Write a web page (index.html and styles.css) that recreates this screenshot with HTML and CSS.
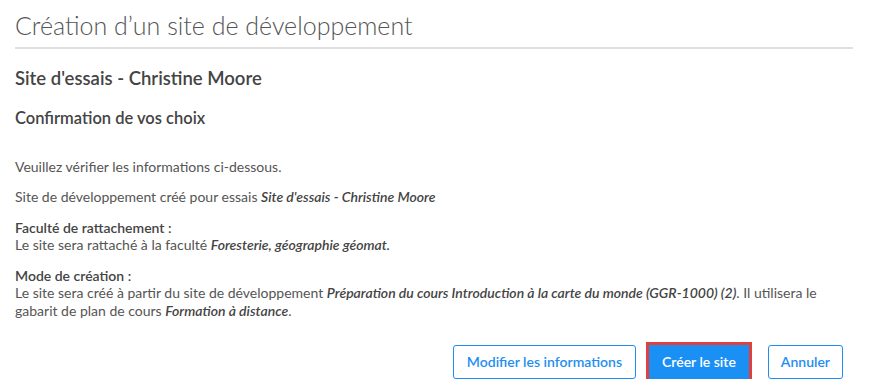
FILE: index.html
```html
<!DOCTYPE html>
<html lang="fr">
<head>
    <meta charset="UTF-8">
    <meta name="viewport" content="width=device-width, initial-scale=1.0">
    <title>Création d'un site de développement</title>
    <link rel="stylesheet" href="styles.css">
</head>
<body>
    <div class="page">
        <h1 class="titre">Création d’un site de développement</h1>
        <h2 class="site">Site d'essais - Christine Moore</h2>
        <h3 class="etape">Confirmation de vos choix</h3>

        <p>Veuillez vérifier les informations ci-dessous.</p>
        <p>Site de développement créé pour essais <em>Site d'essais - Christine Moore</em></p>

        <div class="bloc">
            <strong>Faculté de rattachement :</strong>
            <p>Le site sera rattaché à la faculté <em>Foresterie, géographie géomat.</em></p>
        </div>

        <div class="bloc">
            <strong>Mode de création :</strong>
            <p>Le site sera créé à partir du site de développement <em>Préparation du cours Introduction à la carte du monde (GGR-1000) (2)</em>. Il utilisera le gabarit de plan de cours <em>Formation à distance</em>.</p>
        </div>

        <div class="actions">
            <span class="btn">Modifier les informations</span>
            <span class="btn btn-principal">Créer le site</span>
            <span class="btn">Annuler</span>
        </div>
    </div>
</body>
</html>
```

FILE: styles.css
```css
*{
    margin: 0;padding: 0;box-sizing: border-box;
}
body{
    background-color: #fff;
    font-family: Lato, "Noto Sans", sans-serif;
    font-size: 14px;
    color: #555;
}
.page{
    width: 838px;
    margin-left: 15px;
    padding-top: 9px;
}
.titre{
    font-size: 25px;
    font-weight: 300;
    color: #555;
    line-height: 32px;
    padding-bottom: 6px;
    border-bottom: 2px solid #e0e0e0;
}
.site{
    font-size: 18.5px;
    font-weight: 600;
    color: #444;
    line-height: 24px;
    margin-top: 17px;
}
.etape{
    font-size: 16.5px;
    font-weight: 600;
    color: #444;
    line-height: 22px;
    margin-top: 17px;
}
p{
    line-height: 18px;
}
p em{
    line-height: 18px;
}
.etape + p{
    margin-top: 29px;
}
.page > p + p{
    margin-top: 12px;
}
.bloc{
    margin-top: 13px;
}
.bloc strong{
    display: block;
    font-weight: 600;
    color: #444;
    line-height: 17px;
}
.bloc p{
    line-height: 18px;
}
em{
    font-style: italic;
    font-weight: 600;
    color: #444;
}
.actions{
    display: flex;
    justify-content: flex-end;
    align-items: center;
    padding-right: 10px;
    margin-top: 25px;
}
.btn{
    height: 34px;
    padding: 0 12px;
    line-height: 32px;
    border: 1px solid #1e8ef0;
    border-radius: 3px;
    color: #1e8ef0;
    font-weight: 600;
    font-size: 14px;
    margin-left: 19px;
}
.btn:first-child{
    margin-left: 0;
    padding: 0 13px;
}
.btn-principal{
    background-color: #1a90f5;
    color: #fff;
    border-radius: 0;
    outline: 3px solid #e0403e;
    margin-left: 13px;
}
```
